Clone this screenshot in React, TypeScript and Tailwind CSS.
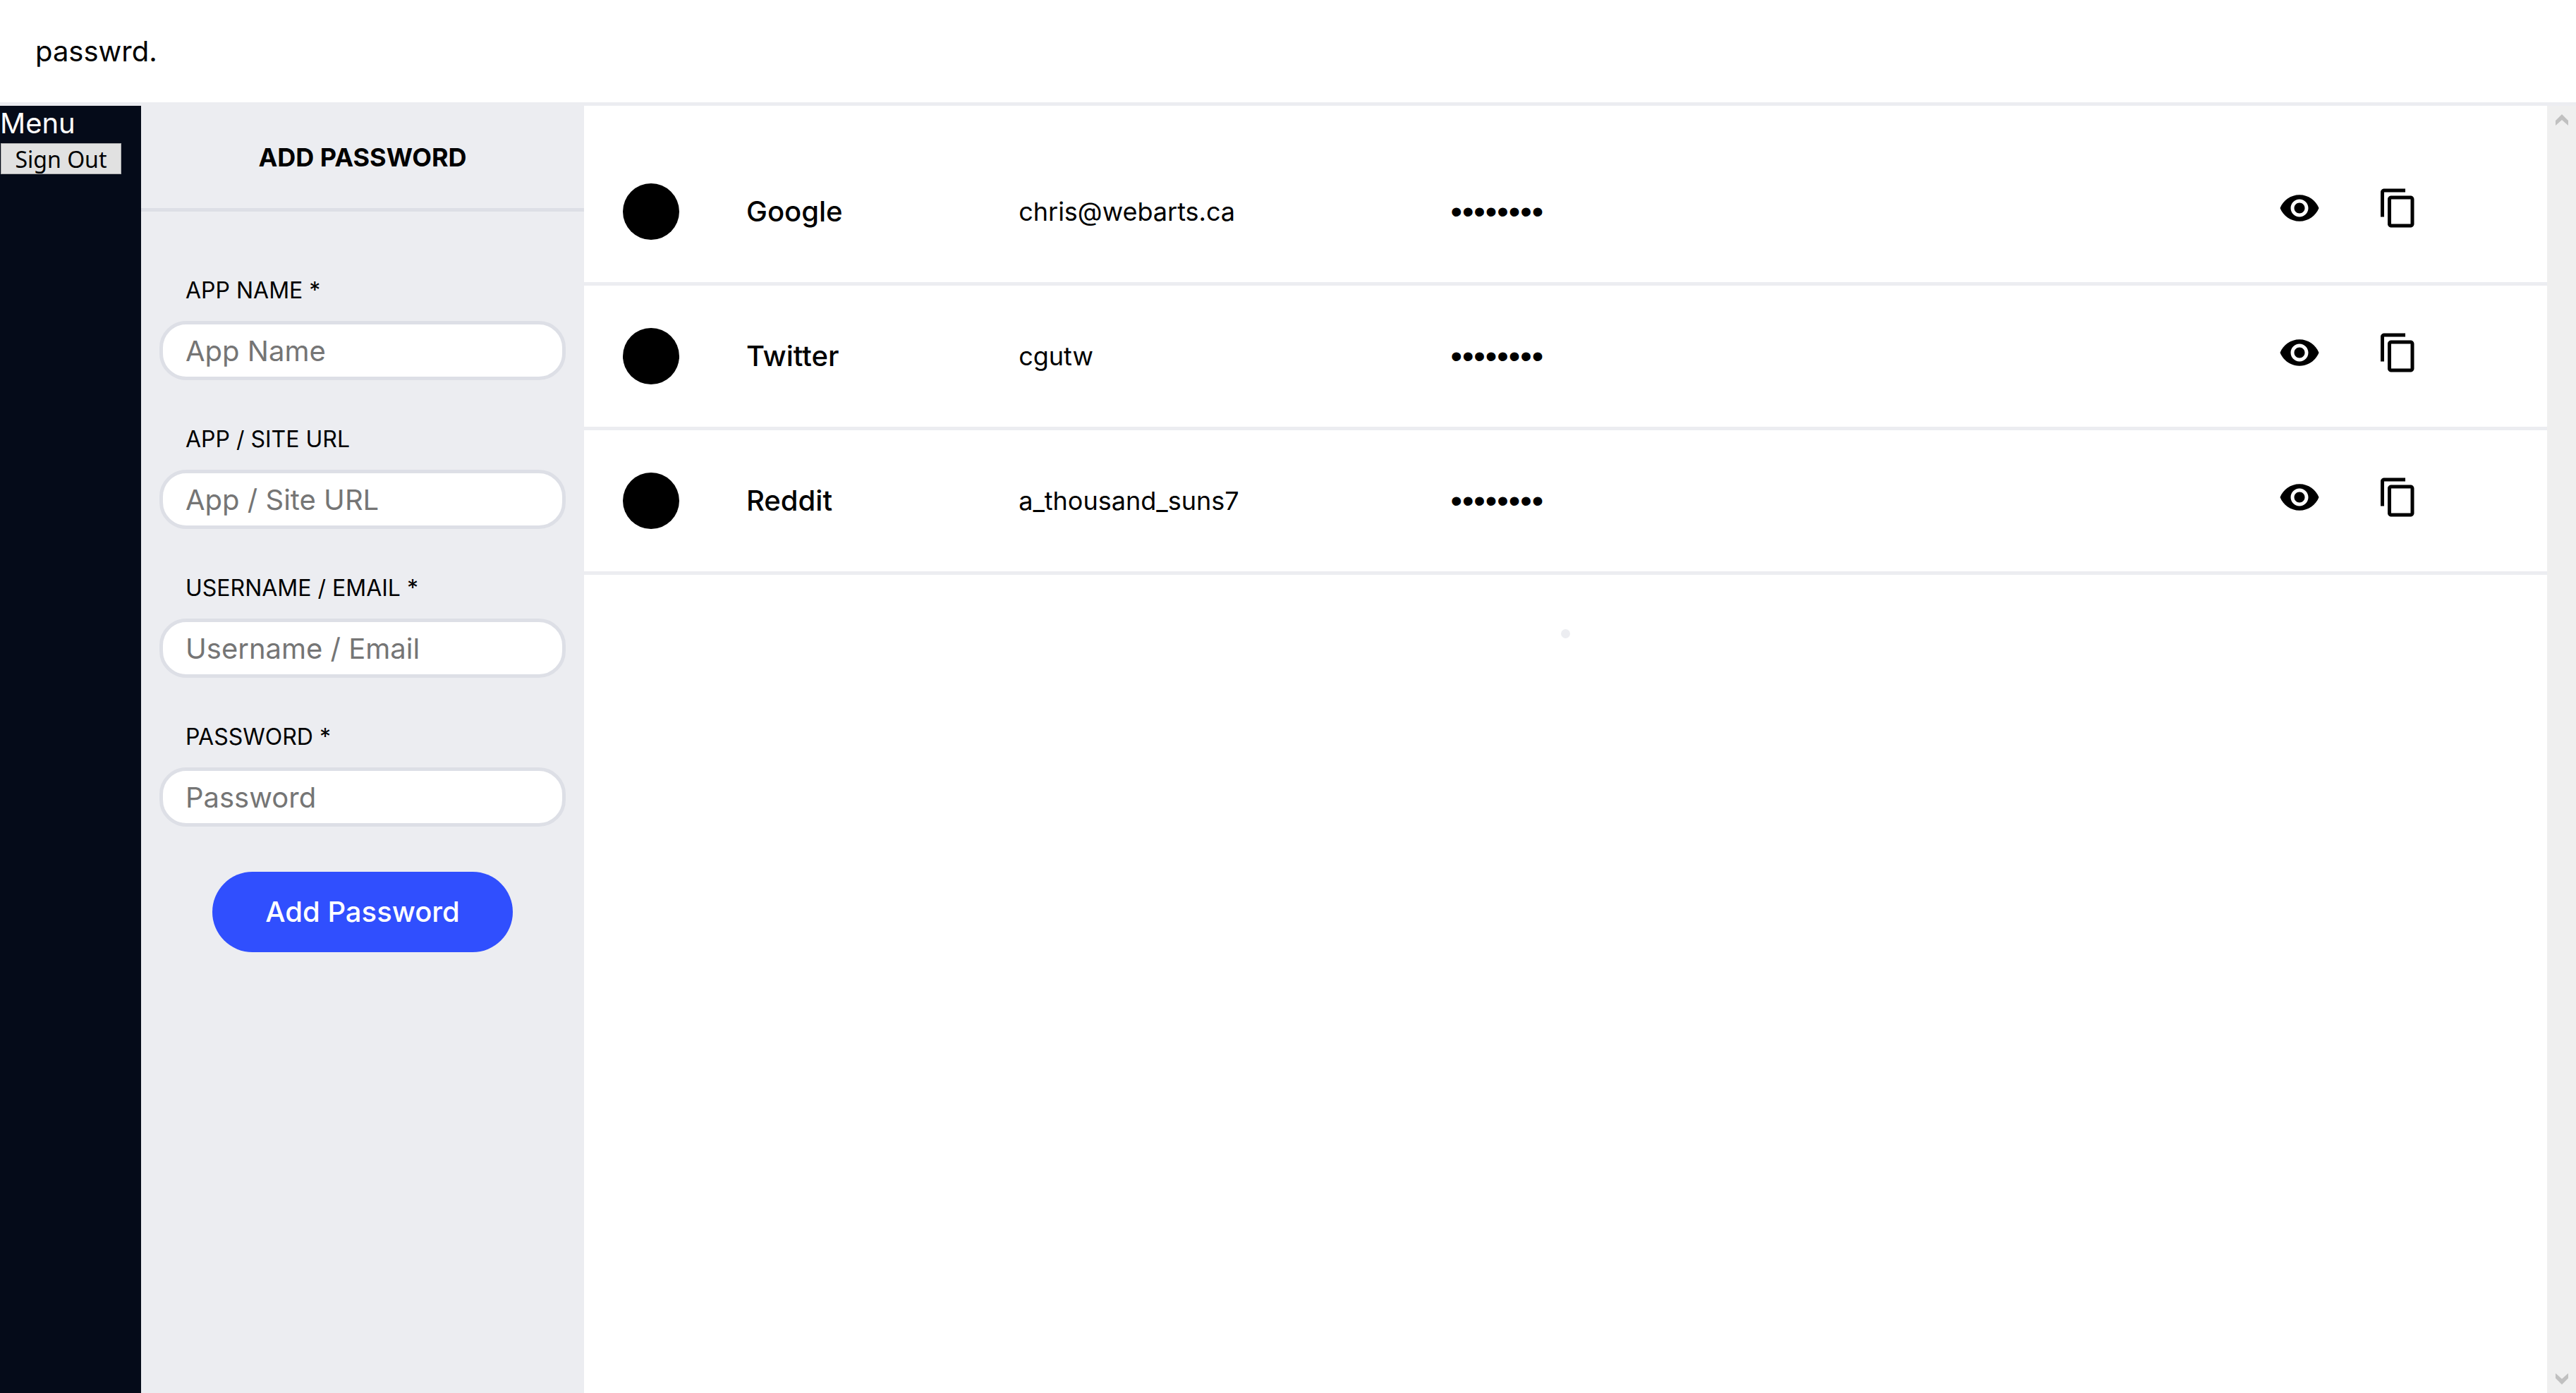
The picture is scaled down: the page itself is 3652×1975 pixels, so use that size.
import React from "react";
import { MdContentCopy, MdVisibility } from "react-icons/md";

const fields = [
  { id: "app-name", label: "APP NAME *", placeholder: "App Name", type: "text" },
  { id: "app-url", label: "APP / SITE URL", placeholder: "App / Site URL", type: "text" },
  { id: "username", label: "USERNAME / EMAIL *", placeholder: "Username / Email", type: "text" },
  { id: "password", label: "PASSWORD *", placeholder: "Password", type: "password" },
];

const entries = [
  { app: "Google", user: "chris@webarts.ca" },
  { app: "Twitter", user: "cgutw" },
  { app: "Reddit", user: "a_thousand_suns7" },
];

function Header() {
  return (
    <header className="flex h-[150px] shrink-0 items-center border-b-[5px] border-[#ecedf1] pl-[50px]">
      <span className="text-[40px] leading-[50px]">passwrd.</span>
    </header>
  );
}

function Sidebar() {
  return (
    <nav className="flex w-[200px] shrink-0 flex-col items-start bg-[#050b19] text-white">
      <span className="text-[40px] leading-[50px]">Menu</span>
      <button
        type="button"
        className="mt-[3px] ml-px h-11 w-[171px] border border-[#adadad] bg-[#e1e1e1] pt-px font-['Noto_Sans',sans-serif] text-[32px] leading-[40px] text-black"
      >
        Sign Out
      </button>
    </nav>
  );
}

function AddPasswordForm() {
  return (
    <section className="w-[628px] shrink-0 bg-[#ecedf1]">
      <h2 className="flex h-[150px] items-center justify-center border-b-[5px] border-[#dddfe6] text-[36px] leading-[44px] font-bold">
        ADD PASSWORD
      </h2>
      <form className="flex flex-col gap-16 px-[26px] pt-[92px]" onSubmit={(e) => e.preventDefault()}>
        {fields.map((field) => (
          <div key={field.id} className="flex flex-col gap-[23px]">
            <label htmlFor={field.id} className="pl-[37px] text-[32px] leading-[40px]">
              {field.label}
            </label>
            <input
              id={field.id}
              type={field.type}
              placeholder={field.placeholder}
              className="h-[84px] w-full rounded-[38px] border-[5px] border-[#dddfe6] bg-white px-8 text-[40px] leading-[50px] placeholder:text-[#757575]"
            />
          </div>
        ))}
        <button
          type="submit"
          className="h-[114px] w-[426px] self-center rounded-full bg-[#304ffe] text-[40px] leading-[50px] font-medium text-white"
        >
          Add Password
        </button>
      </form>
    </section>
  );
}

function PasswordList() {
  return (
    <main className="min-w-0 flex-1 pt-[50px]">
      <ul>
        {entries.map((entry) => (
          <li
            key={entry.app}
            className="grid h-[205px] grid-cols-[175px_386fr_612fr_1173fr_140px_60px] items-center border-b-[5px] border-[#ecedf1] pr-[181px] pl-[55px]"
          >
            <span className="size-20 rounded-full bg-black" />
            <span className="text-[40px] leading-[50px] font-medium">{entry.app}</span>
            <span className="text-[36px] leading-[44px]">{entry.user}</span>
            <span className="font-['Liberation_Sans',sans-serif] text-[47px] leading-[50px]">••••••••</span>
            <button type="button" aria-label={"Show " + entry.app + " password"} className="mb-[10px] size-[60px]">
              <MdVisibility className="size-full" />
            </button>
            <button type="button" aria-label={"Copy " + entry.app + " password"} className="mb-[10px] size-[60px]">
              <MdContentCopy className="size-full" />
            </button>
          </li>
        ))}
      </ul>
      <div className="mx-auto mt-[77px] size-[13px] rounded-full bg-[#ecedf1]" />
    </main>
  );
}

function ScrollTrack() {
  return (
    <div aria-hidden="true" className="flex w-[41px] shrink-0 flex-col items-center justify-between bg-[#efefef] py-3">
      <svg width="18" height="16" viewBox="0 0 18 16" fill="#c0c0c0">
        <path d="M9 0 18 9V16L9 8 0 16V9Z" />
      </svg>
      <svg width="18" height="16" viewBox="0 0 18 16" fill="#c0c0c0">
        <path d="M9 16 18 7V0L9 8 0 0V7Z" />
      </svg>
    </div>
  );
}

export default function App() {
  return (
    <div className="flex h-screen flex-col overflow-hidden bg-white font-['Inter',sans-serif] text-black">
      <Header />
      <div className="flex min-h-0 flex-1">
        <Sidebar />
        <AddPasswordForm />
        <PasswordList />
        <ScrollTrack />
      </div>
    </div>
  );
}
